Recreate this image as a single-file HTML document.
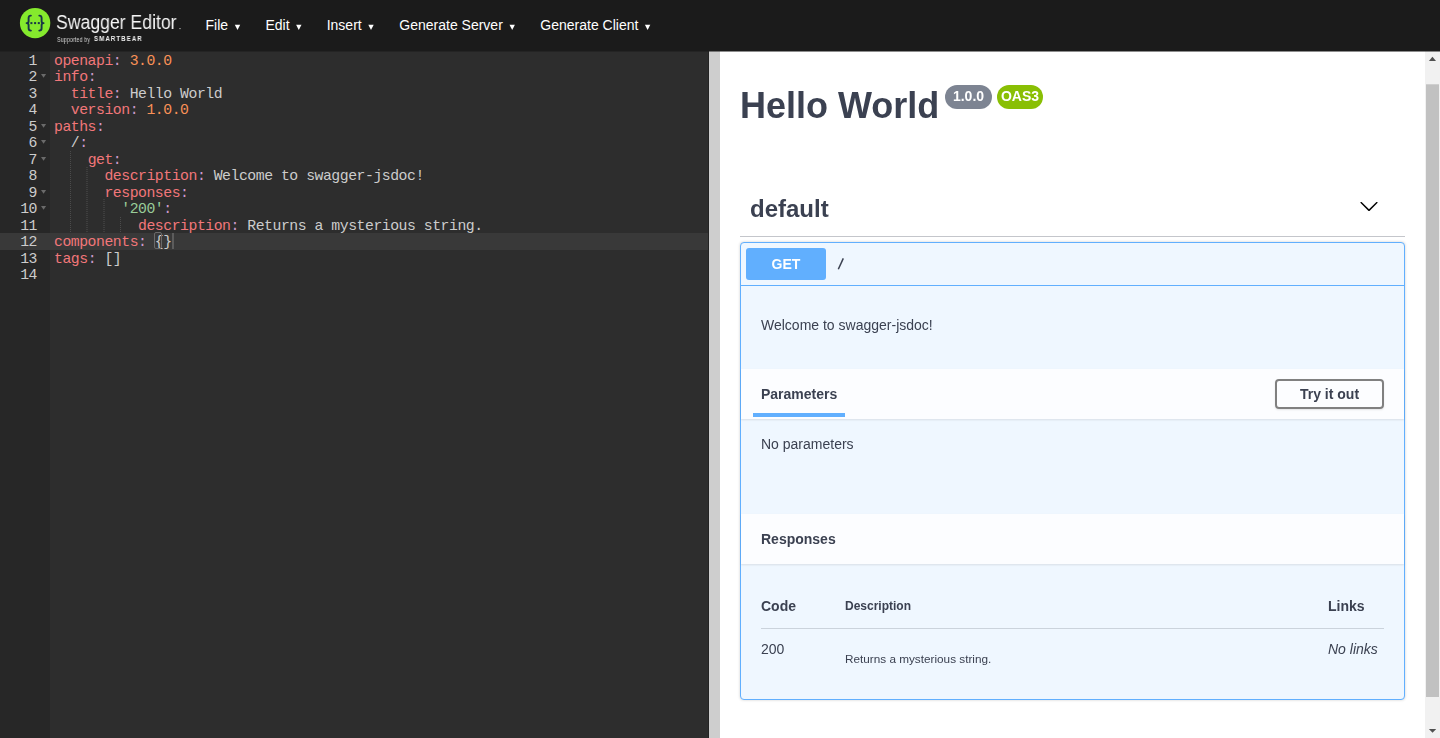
<!DOCTYPE html>
<html>
<head>
<meta charset="utf-8">
<style>
*{box-sizing:border-box}
html,body{margin:0;padding:0;width:1440px;height:738px;overflow:hidden;background:#fff;font-family:"Liberation Sans",sans-serif}
.abs{position:absolute}
#topbar{position:absolute;left:0;top:0;width:1440px;height:51px;background:#1b1b1b}
#topbar .menu{position:absolute;top:17px;font-size:14px;line-height:16px;color:#fff;white-space:nowrap}
#topbar .tri{position:absolute;top:25px}
#editor{position:absolute;left:0;top:51px;width:708px;height:687px;background:#2d2d2d;overflow:hidden}
#gutter{position:absolute;left:0;top:0;width:50px;height:687px;background:#272727}
.ln{position:absolute;left:0;width:37px;text-align:right;font-family:"Liberation Mono",monospace;font-size:14.8px;letter-spacing:-0.45px;color:#ccc;height:16.5px;line-height:16.5px;padding-top:1.8px}
.code{position:absolute;left:54px;font-family:"Liberation Mono",monospace;font-size:14.8px;letter-spacing:-0.475px;color:#ccc;white-space:pre;height:16.5px;line-height:16.5px;padding-top:1.8px}
.k{color:#f2777a}
.n{color:#f99157}
.s{color:#99cc99}
.p{color:#cc99cc}
.fold{position:absolute;left:40.8px;width:0;height:0;border-left:2.6px solid transparent;border-right:2.6px solid transparent;border-top:3.8px solid #6a6a6a}
.guide{position:absolute;width:1px;background:repeating-linear-gradient(to bottom,#4b4b4b 0,#4b4b4b 1px,transparent 1px,transparent 2px)}
#split{position:absolute;left:708px;top:51px;width:12px;height:687px;background:#cecece;border-left:1px solid #232323}
#preview{position:absolute;left:720px;top:51px;width:705px;height:687px;background:#fff;overflow:hidden;color:#3b4151}
.t{position:absolute;line-height:20px;white-space:nowrap;color:#3b4151;will-change:transform}
#sb{position:absolute;left:1425px;top:51px;width:15px;height:687px;background:#f1f1f1}
</style>
</head>
<body>
<div id="topbar">
  <svg class="abs" style="left:0;top:0" width="200" height="51" viewBox="0 0 200 51">
    <circle cx="35.1" cy="23.1" r="15.2" fill="#85ea2d"/>
    <g fill="none" stroke="#173647" stroke-width="1.9" stroke-linecap="round" stroke-linejoin="round">
      <path d="M30.9 15.6 C29.2 15.6 28.6 16.4 28.6 18 L28.6 21.2 C28.6 22.3 27.8 23 26.6 23.1 C27.8 23.2 28.6 23.9 28.6 25 L28.6 28.3 C28.6 29.9 29.2 30.6 30.9 30.6"/>
      <path d="M39.3 15.6 C41 15.6 41.6 16.4 41.6 18 L41.6 21.2 C41.6 22.3 42.4 23 43.6 23.1 C42.4 23.2 41.6 23.9 41.6 25 L41.6 28.3 C41.6 29.9 41 30.6 39.3 30.6"/>
    </g>
    <g fill="#173647"><rect x="30.4" y="22.1" width="2" height="2"/><rect x="34.1" y="22.1" width="2" height="2"/><rect x="37.8" y="22.1" width="2" height="2"/></g>
    <circle cx="180" cy="28.6" r="0.7" fill="#ccc"/>
  </svg>
  <div class="abs" style="left:56px;top:9.8px;font-size:20.5px;line-height:23px;color:#f6f6f6;white-space:nowrap;transform:scaleX(0.86);transform-origin:0 0;will-change:transform">Swagger Editor</div>
  <div class="abs" style="left:57px;top:35.5px;font-size:7px;line-height:8px;color:#d0d0d0;white-space:nowrap;transform:scaleX(0.79);transform-origin:0 0;will-change:transform">Supported by</div>
  <div class="abs" style="left:93.7px;top:35px;font-size:7.2px;line-height:8px;font-weight:bold;letter-spacing:1.2px;color:#f0f0f0;transform:scaleX(0.86);transform-origin:0 0;white-space:nowrap;will-change:transform">SMARTBEAR</div>
  <div class="menu" style="left:205.5px">File</div>
  <div class="menu" style="left:265.5px">Edit</div>
  <div class="menu" style="left:326.7px">Insert</div>
  <div class="menu" style="left:399.3px">Generate Server</div>
  <div class="menu" style="left:540.3px">Generate Client</div>
  <svg class="abs" style="left:0;top:0" width="700" height="51">
    <g fill="#fff">
      <polygon points="234.8,24.8 240.2,24.8 237.5,30.1"/>
      <polygon points="296.1,24.8 301.5,24.8 298.8,30.1"/>
      <polygon points="368.3,24.8 373.7,24.8 371,30.1"/>
      <polygon points="509.5,24.8 514.9,24.8 512.2,30.1"/>
      <polygon points="644.9,24.8 650.3,24.8 647.6,30.1"/>
    </g>
  </svg>
</div>

<div id="editor">
  <div id="gutter"></div>
<div class="abs" style="left:0;top:182px;width:708px;height:17px;background:#393939"></div>
<div class="ln" style="top:0.0px">1</div>
<div class="code" style="top:0.0px"><span class="k">openapi</span><span class="p">:</span> <span class="n">3.0.0</span></div>
<div class="ln" style="top:16.5px">2</div>
<svg class="abs" style="left:40.9px;top:23px" width="6" height="5"><polygon points="0,0 5.1,0 2.55,3.7" fill="#6a6a6a"/></svg>
<div class="code" style="top:16.5px"><span class="k">info</span><span class="p">:</span></div>
<div class="ln" style="top:33.0px">3</div>
<div class="code" style="top:33.0px">  <span class="k">title</span><span class="p">:</span> Hello World</div>
<div class="ln" style="top:49.5px">4</div>
<div class="code" style="top:49.5px">  <span class="k">version</span><span class="p">:</span> <span class="n">1.0.0</span></div>
<div class="ln" style="top:66.0px">5</div>
<svg class="abs" style="left:40.9px;top:72.5px" width="6" height="5"><polygon points="0,0 5.1,0 2.55,3.7" fill="#6a6a6a"/></svg>
<div class="code" style="top:66.0px"><span class="k">paths</span><span class="p">:</span></div>
<div class="ln" style="top:82.5px">6</div>
<svg class="abs" style="left:40.9px;top:89px" width="6" height="5"><polygon points="0,0 5.1,0 2.55,3.7" fill="#6a6a6a"/></svg>
<div class="code" style="top:82.5px">  /<span class="p">:</span></div>
<div class="ln" style="top:99.0px">7</div>
<svg class="abs" style="left:40.9px;top:105.5px" width="6" height="5"><polygon points="0,0 5.1,0 2.55,3.7" fill="#6a6a6a"/></svg>
<div class="code" style="top:99.0px">    <span class="k">get</span><span class="p">:</span></div>
<div class="ln" style="top:115.5px">8</div>
<div class="code" style="top:115.5px">      <span class="k">description</span><span class="p">:</span> Welcome to swagger-jsdoc!</div>
<div class="ln" style="top:132.0px">9</div>
<svg class="abs" style="left:40.9px;top:138.5px" width="6" height="5"><polygon points="0,0 5.1,0 2.55,3.7" fill="#6a6a6a"/></svg>
<div class="code" style="top:132.0px">      <span class="k">responses</span><span class="p">:</span></div>
<div class="ln" style="top:148.5px">10</div>
<svg class="abs" style="left:40.9px;top:155px" width="6" height="5"><polygon points="0,0 5.1,0 2.55,3.7" fill="#6a6a6a"/></svg>
<div class="code" style="top:148.5px">        <span class="s">'200'</span><span class="p">:</span></div>
<div class="ln" style="top:165.0px">11</div>
<div class="code" style="top:165.0px">          <span class="k">description</span><span class="p">:</span> Returns a mysterious string.</div>
<div class="ln" style="top:181.5px">12</div>
<div class="code" style="top:181.5px"><span class="k">components</span><span class="p">:</span> {}</div>
<div class="ln" style="top:198.0px">13</div>
<div class="code" style="top:198.0px"><span class="k">tags</span><span class="p">:</span> []</div>
<div class="ln" style="top:214.5px">14</div>
<div class="code" style="top:214.5px"></div>
<div class="abs" style="left:70px;top:99px;width:1px;height:83px;background:repeating-linear-gradient(to bottom,transparent 0,transparent 1px,#4b4b4b 1px,#4b4b4b 2px)"></div>
<div class="abs" style="left:86px;top:116px;width:2px;height:66px;background:repeating-linear-gradient(to bottom,#3e3e3e 0,#3e3e3e 1px,transparent 1px,transparent 2px)"></div>
<div class="abs" style="left:103px;top:148px;width:2px;height:34px;background:repeating-linear-gradient(to bottom,#3e3e3e 0,#3e3e3e 1px,transparent 1px,transparent 2px)"></div>
<div class="abs" style="left:120px;top:165px;width:1px;height:17px;background:repeating-linear-gradient(to bottom,transparent 0,transparent 1px,#4b4b4b 1px,#4b4b4b 2px)"></div>
<div class="abs" style="left:154px;top:180.5px;width:8px;height:17px;border:1px solid #6a6a6a;border-radius:2px"></div>
<div class="abs" style="left:171.7px;top:181.5px;width:2px;height:16.5px;background:#5c5c5c"></div>
</div>
<div id="split"></div>
<div id="preview">
<div class="t" style="left:20px;top:35px;font-size:36px;font-weight:bold;line-height:40px">Hello World</div>
<div class="abs" style="left:224.5px;top:33.5px;width:47px;height:24px;background:#7d8492;border-radius:12px"></div>
<div class="t" style="left:224.5px;top:35px;font-size:14px;width:47px;text-align:center;font-weight:bold;color:#fff">1.0.0</div>
<div class="abs" style="left:276.5px;top:33.5px;width:46px;height:24px;background:#89bf04;border-radius:12px"></div>
<div class="t" style="left:276.5px;top:35px;font-size:14px;width:46px;text-align:center;font-weight:bold;color:#fff">OAS3</div>
<div class="t" style="left:30px;top:142.5px;font-size:24px;font-weight:bold;line-height:30px">default</div>
<div class="abs" style="left:20px;top:185px;width:665px;height:1px;background:#c4c6cb"></div>
<svg class="abs" style="left:639px;top:144.8px" width="20" height="20" viewBox="0 0 20 20"><path d="M17.418 6.109c.272-.268.709-.268.979 0s.271.701 0 .969l-7.908 7.83c-.27.268-.707.268-.979 0l-7.908-7.83c-.27-.268-.27-.701 0-.969.271-.268.709-.268.979 0L10 13.25l7.418-7.141z" fill="#000"/></svg>
<div class="abs" style="left:20px;top:191px;width:665px;height:458px;background:#eff7ff;border:1px solid #61affe;border-radius:4px;box-shadow:0 0 3px rgba(0,0,0,.19)"></div>
<div class="abs" style="left:21px;top:234px;width:663px;height:1px;background:#61affe"></div>
<div class="abs" style="left:26px;top:197px;width:80px;height:32px;background:#61affe;border-radius:3px"></div>
<div class="t" style="left:26px;top:203px;font-size:14px;width:80px;text-align:center;font-weight:bold;color:#fff">GET</div>
<svg class="abs" style="left:116px;top:204px" width="12" height="16"><line x1="2.3" y1="14.2" x2="7.3" y2="3.4" stroke="#3b4151" stroke-width="1.5"/></svg>
<div class="t" style="left:41px;top:264px;font-size:14px;">Welcome to swagger-jsdoc!</div>
<div class="abs" style="left:21px;top:318px;width:663px;height:50px;background:#fcfdff;box-shadow:0 1px 2px rgba(0,0,0,.1)"></div>
<div class="t" style="left:41px;top:333px;font-size:14px;font-weight:bold">Parameters</div>
<div class="abs" style="left:33.2px;top:361.5px;width:91.6px;height:4px;background:#61affe"></div>
<div class="abs" style="left:555px;top:328px;width:109px;height:29.5px;border:2px solid #808080;border-radius:4px;box-shadow:0 1px 2px rgba(0,0,0,.1)"></div>
<div class="t" style="left:555px;top:333px;font-size:14px;width:109px;text-align:center;font-weight:bold">Try it out</div>
<div class="t" style="left:41px;top:383px;font-size:14px;">No parameters</div>
<div class="abs" style="left:21px;top:463px;width:663px;height:50px;background:#fcfdff;box-shadow:0 1px 2px rgba(0,0,0,.1)"></div>
<div class="t" style="left:41px;top:478px;font-size:14px;font-weight:bold">Responses</div>
<div class="t" style="left:41px;top:545px;font-size:14px;font-weight:bold">Code</div>
<div class="t" style="left:125px;top:545px;font-size:12px;font-weight:bold">Description</div>
<div class="t" style="left:608px;top:545px;font-size:14px;font-weight:bold">Links</div>
<div class="abs" style="left:41px;top:577px;width:623px;height:1px;background:#cbd3dc"></div>
<div class="t" style="left:41px;top:588px;font-size:14px;">200</div>
<div class="t" style="left:124.8px;top:598px;font-size:11.75px;">Returns a mysterious string.</div>
<div class="t" style="left:608px;top:587.5px;font-size:14px;font-style:italic">No links</div>
</div>
<div class="abs" style="left:0;top:51px;width:1440px;height:1px;background:rgba(27,27,27,.5);z-index:5"></div>
<div id="sb">
  <svg class="abs" style="left:0;top:0" width="15" height="687">
    <polygon points="3.9,10 11,10 7.45,5.8" fill="#505050"/>
    <rect x="1" y="33.3" width="13" height="612.7" fill="#c1c1c1"/>
    <polygon points="3.9,678.1 11.2,678.1 7.55,681.7" fill="#505050"/>
  </svg>
</div>
</body>
</html>
